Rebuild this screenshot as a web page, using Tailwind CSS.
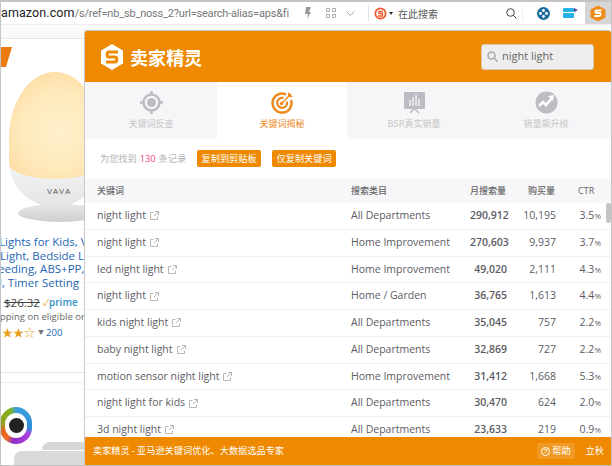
<!DOCTYPE html>
<html><head><meta charset="utf-8"><script src="https://cdn.jsdelivr.net/npm/@tailwindcss/browser@4"></script></head>
<body class="m-0">
<div class="relative w-[612px] h-[466px] overflow-hidden bg-white font-['Open_Sans','Noto_Sans_CJK_SC',sans-serif] border-t-2 border-l border-r border-b border-[#c4c4c4]">
  <!-- toolbar -->
  <div class="flex items-center h-[22px] bg-white text-[#777]">
    <div class="w-[307px] overflow-hidden whitespace-nowrap font-['Roboto',sans-serif] text-[11px] tracking-[-0.2px]"><span class="text-[#222] text-[12.5px] tracking-[0.1px]">amazon.com</span>/s/ref=nb_sb_noss_2?url=search-alias=aps&amp;fi</div>
    <svg class="w-[6px] h-[12px] shrink-0 ml-[1px]" viewBox="0 0 6 12"><path d="M1 0h5L4 5h2l-4 7 1-5H0z" fill="#999"/></svg>
    <svg class="w-[10px] h-[10px] shrink-0 ml-[15px]" viewBox="0 0 10 10" fill="none" stroke="#aaa"><path d="M.5.5h3v3h-3zM6.500.5h3v3h-3zM.5 6.500h3v3h-3zM6.500 6.500h3v3h-3z"/></svg>
    <svg class="w-[9px] h-[5px] shrink-0 ml-[10px]" viewBox="0 0 9 5" fill="none" stroke="#aaa"><path d="M.5.5l4 4 4-4"/></svg>
    <div class="w-px h-[16px] shrink-0 bg-[#e5e5e5] ml-[13px]"></div>
    <svg class="w-[13px] h-[13px] shrink-0 ml-[5px]" viewBox="0 0 13 13"><circle cx="6.500" cy="6.500" r="6" fill="#f15a30"/><circle cx="6.500" cy="6.500" r="4.300" fill="#fff"/><path d="M9 4.500H5v2h3.500v2.500H4" fill="none" stroke="#f15a30" stroke-width="1.300"/></svg>
    <svg class="w-[4px] h-[3px] shrink-0 ml-[2px]" viewBox="0 0 4 3"><path d="M0 0h4L2 3z" fill="#333"/></svg>
    <div class="ml-[5px] w-[108px] shrink-0 font-['Noto_Sans_CJK_SC',sans-serif] text-[10px] text-[#555]">在此搜索</div>
    <svg class="w-[11px] h-[11px] shrink-0" viewBox="0 0 11 11" fill="none" stroke="#444" stroke-width="1"><circle cx="4.500" cy="4.500" r="3.800"/><path d="M7.500 7.500L10.500 10.500"/></svg>
    <div class="w-px h-[16px] shrink-0 bg-[#eee] ml-[5px]"></div>
    <svg class="w-[13px] h-[13px] shrink-0 ml-[14px]" viewBox="0 0 13 13"><circle cx="6.500" cy="6.500" r="6.500" fill="#1d6c9e"/><circle cx="6.500" cy="3.500" r="1.400" fill="#fff"/><circle cx="6.500" cy="9.500" r="1.400" fill="#fff"/><circle cx="3.500" cy="6.500" r="1.400" fill="#fff"/><circle cx="9.500" cy="6.500" r="1.400" fill="#fff"/></svg>
    <svg class="w-[15px] h-[10px] shrink-0 ml-[13px]" viewBox="0 0 15 10"><rect x="0" y="0" width="11" height="4" rx="1" fill="#24b2e6"/><rect x="0" y="5" width="11" height="5" rx="1" fill="#24b2e6"/><path d="M11 0l4 2-4 2z" fill="#5a3fa0"/></svg>
    <div class="ml-[7px] w-[26px] h-[22px] shrink-0 bg-[#d6d6d6] flex items-center justify-center">
      <svg class="w-[16px] h-[17px]" viewBox="0 0 16 17"><path d="M8 .5l7.500 4v8L8 16.500.5 12.500v-8z" fill="#f08c1e"/><path d="M11.500 5.500H6.500C5 5.500 5 8 6.500 8h3c1.500 0 1.500 3-.5 3H4.500" fill="none" stroke="#fff" stroke-width="1.800"/></svg>
    </div>
  </div>

  <!-- page beneath -->
  <div class="border-t border-[#eee] h-[14px] bg-[#fafafa]"></div>
  <div class="border-t border-[#e6e6e6] h-[9px]"></div>
  <div class="relative">
    <div class="w-0 h-0 border-t-[20px] border-t-[#ec7a0f] border-r-[6px] border-r-transparent border-l-[5px] border-l-[#ec7a0f]"></div>
    <div class="absolute left-[17px] top-[157px] w-[84px] h-[18px] rounded-[50%] bg-gradient-to-b from-[#e6e6e6] to-[#cfcfcf]"></div>
    <div class="absolute left-[8px] top-[110px] w-[92px] h-[50px] rounded-b-[46px] bg-gradient-to-b from-[#f7f7f7] to-[#e4e4e4]"></div>
    <div class="absolute left-[8px] top-[25px] w-[92px] h-[107px] rounded-[50%_50%_50%_50%/62%_62%_14%_14%] bg-[radial-gradient(circle_at_55%_55%,#fff0cc_0%,#fee9bb_50%,#fcd696_100%)]"></div>
    <div class="absolute left-[46px] top-[141px] text-[7.500px] leading-none text-[#555] font-['Liberation_Sans',sans-serif] tracking-[1.600px]">VAVA</div>
    <div class="absolute left-0 top-[188px] w-[83px] overflow-hidden whitespace-nowrap text-[11.5px] leading-[13.700px] text-[#1e66b5]">
      <div class="-ml-[2px]">Lights for Kids, VAVA</div>
      <div class="-ml-[1px]">Light, Bedside Lamp</div>
      <div class="-ml-[3px]">eeding, ABS+PP, Lamp</div>
      <div class="-ml-[2px]">l, Timer Setting</div>
      <div class="flex items-center mt-[6px] ml-[3px]"><span class="text-[#444] line-through text-[11.5px]">$26.32</span><span class="ml-[3px] text-[#f39c1f] text-[9px]">✓</span><span class="text-[#2f8fc4] text-[10px] font-semibold">prime</span></div>
      <div class="text-[#666] text-[9.500px] leading-[13px] -ml-[1px]">pping on eligible order</div>
      <div class="flex items-center mt-[3px] ml-[1px] text-[9.500px]"><span class="text-[#e8a020] text-[11px] leading-[13px]">★★☆</span><span class="ml-[3px] text-[#777] text-[6px]">▼</span><span class="ml-[2px]">200</span></div>
    </div>
    <div class="absolute left-0 top-[325px] w-[83px] h-px bg-[#e5e5e5]"></div>
    <div class="absolute left-0 top-[335px] w-[83px] border-t border-[#eee]"></div>
    <div class="absolute -left-[1px] top-[360px] w-[32px] h-[37px] rounded-full bg-[conic-gradient(#3aa0e0_0deg,#2f8fd8_100deg,#b040e0_125deg,#9030c8_190deg,#f06a20_215deg,#e06020_250deg,#98a020_275deg,#80b020_340deg,#3aa0e0_360deg)] flex items-center justify-center"><div class="w-[22px] h-[25px] rounded-full bg-white flex items-center justify-center"><div class="w-[15px] h-[15px] rounded-full bg-[#222]"></div></div></div>
    <div class="absolute left-[41px] top-[395px] w-[42px] h-[12px] bg-[#d6d8d8] rounded-tl-[8px]"></div>
    <div class="absolute left-[13px] top-[403px] w-[70px] h-[20px] bg-[#d8dada] rounded-tl-[8px] border-t border-white"></div>
  </div>

  <!-- popup panel -->
  <div class="absolute left-[83px] top-[28px] w-[527px] h-[435px] flex flex-col bg-white rounded-t-[3px] border-l border-t border-[#c9c9c9]">
    <div class="flex items-center justify-between h-[51px] bg-[#ee8900] rounded-t-[2px] shrink-0 pl-[16px] pr-[17px]">
      <div class="flex items-center gap-[7px]">
        <svg class="w-[22px] h-[26px]" viewBox="0 0 22 26"><path d="M11 0l11 6.500v13L11 26 0 19.500v-13z" fill="#fff"/><path d="M17 8H8c-2.500 0-2.500 5 0 5h6c2.500 0 2.500 5 0 5H5" fill="none" stroke="#ee8900" stroke-width="3"/></svg>
        <span class="font-['Noto_Sans_CJK_SC',sans-serif] font-bold text-[18px] leading-none tracking-[0.1px] text-white">卖家精灵</span>
      </div>
      <div class="flex items-center w-[113px] h-[26px] rounded-[3px] bg-[#eee] border border-[#d9c9b0] pl-[5px] text-[11px] text-[#666]">
        <svg class="w-[11px] h-[11px] mr-[4px]" viewBox="0 0 11 11" fill="none" stroke="#a8a8b0" stroke-width="1.500"><circle cx="4.500" cy="4.500" r="3.500"/><path d="M7 7l3.500 3.500"/></svg>
        <span>night light</span>
      </div>
    </div>
    <div class="grid grid-cols-[132px_130px_134px_1fr] h-[57px] shrink-0 bg-[#f6f6f8] text-[9px] font-['Noto_Sans_CJK_SC',sans-serif] text-[#c6c6c6] text-center">
      <div class="flex flex-col items-center pt-[9px]">
        <svg class="w-[23px] h-[23px]" viewBox="0 0 23 23" fill="none" stroke="#bcbcc4"><circle cx="11.500" cy="11.500" r="8" stroke-width="2.500"/><circle cx="11.500" cy="11.500" r="4.500" fill="#bcbcc4" stroke="none"/><path d="M11.500 0v4M11.500 19v4M0 11.500h4M19 11.500h4" stroke-width="2.500"/></svg>
        <span class="mt-[3px]">关键词反查</span>
      </div>
      <div class="flex flex-col items-center pt-[9px] bg-white text-[#ee8a1d]">
        <svg class="w-[23px] h-[23px]" viewBox="0 0 23 23" fill="none" stroke="#ee8a1d"><path d="M15 3.500A9.500 9.500 0 1 0 20 9" stroke-width="2.500"/><path d="M12.500 7A5 5 0 1 0 16 10.500" stroke-width="2.200"/><circle cx="10.500" cy="12.500" r="1.800" fill="#ee8a1d" stroke="none"/><path d="M11 12L20 3" stroke-width="1.500"/><path d="M17 1v5h5z" fill="#ee8a1d" stroke="none"/></svg>
        <span class="mt-[3px]">关键词揭秘</span>
      </div>
      <div class="flex flex-col items-center pt-[9px]">
        <svg class="w-[23px] h-[23px]" viewBox="0 0 23 23"><rect x="1" y="1" width="21" height="17" rx="1" fill="#bcbcc4"/><path d="M7 22l4.500-4.500L16 22" fill="none" stroke="#bcbcc4" stroke-width="1.600"/><path d="M7 9v6M10 6v9M13 4v11M16 8v7" stroke="#fff" stroke-width="1.200"/></svg>
        <span class="mt-[3px]">BSR真实销量</span>
      </div>
      <div class="flex flex-col items-center pt-[9px]">
        <svg class="w-[23px] h-[23px]" viewBox="0 0 23 23"><circle cx="11.500" cy="11.500" r="11" fill="#bcbcc4"/><path d="M4 15l4-4 3 3 6-7" fill="none" stroke="#fff" stroke-width="2.600"/><path d="M13 5l6-1-1 6z" fill="#fff"/></svg>
        <span class="mt-[3px]">销量飙升榜</span>
      </div>
    </div>
    <div class="flex items-center h-[39px] shrink-0 pl-[15px] text-[9.200px] font-['Noto_Sans_CJK_SC',sans-serif] text-[#b4b4b4]">
      <span>为您找到</span><span class="mx-[3px] text-[#f0457a] font-['Open_Sans',sans-serif]">130</span><span>条记录</span>
      <span class="ml-[11px] h-[17px] w-[64px] justify-center flex items-center rounded-[2px] bg-[#ee8900] text-white">复制到剪贴板</span>
      <span class="ml-[11px] h-[17px] w-[64px] justify-center flex items-center rounded-[2px] bg-[#ee8900] text-white">仅复制关键词</span>
    </div>
    <div class="relative flex-1 min-h-0 overflow-hidden">
      <div class="flex items-center h-[25px] bg-[#f7f7f9] pl-[12px] text-[9px] font-['Noto_Sans_CJK_SC',sans-serif] font-medium text-[#666]">
        <div class="w-[254px]">关键词</div><div class="w-[119px]">搜索类目</div><div class="w-[58px]">月搜索量</div><div class="w-[50px]">购买量</div><div class="font-['Open_Sans',sans-serif]">CTR</div>
      </div>
      <div class="text-[10.500px] text-[#5c5c64]">
        <div class="flex items-center h-[26.750px] pl-[12px] border-b border-[#efeff2]"><div class="w-[254px] flex items-center gap-[4px]">night light<svg class="w-[9px] h-[9px]" viewBox="0 0 9 9" fill="none" stroke="#b8b8b8"><path d="M3.500 1.500H.5v7h7V5.500M5 .5h3.500V4M8.500.5L4 5"/></svg></div><div class="w-[119px]">All Departments</div><div class="w-[37px] text-right font-semibold">290,912</div><div class="w-[49px] text-right">10,195</div><div class="w-[45px] text-right">3.5<span class="text-[8px]">%</span></div></div>
        <div class="flex items-center h-[26.750px] pl-[12px] border-b border-[#efeff2]"><div class="w-[254px] flex items-center gap-[4px]">night light<svg class="w-[9px] h-[9px]" viewBox="0 0 9 9" fill="none" stroke="#b8b8b8"><path d="M3.500 1.500H.5v7h7V5.500M5 .5h3.500V4M8.500.5L4 5"/></svg></div><div class="w-[119px]">Home Improvement</div><div class="w-[37px] text-right font-semibold">270,603</div><div class="w-[49px] text-right">9,937</div><div class="w-[45px] text-right">3.7<span class="text-[8px]">%</span></div></div>
        <div class="flex items-center h-[26.750px] pl-[12px] border-b border-[#efeff2]"><div class="w-[254px] flex items-center gap-[4px]">led night light<svg class="w-[9px] h-[9px]" viewBox="0 0 9 9" fill="none" stroke="#b8b8b8"><path d="M3.500 1.500H.5v7h7V5.500M5 .5h3.500V4M8.500.5L4 5"/></svg></div><div class="w-[119px]">Home Improvement</div><div class="w-[37px] text-right font-semibold">49,020</div><div class="w-[49px] text-right">2,111</div><div class="w-[45px] text-right">4.3<span class="text-[8px]">%</span></div></div>
        <div class="flex items-center h-[26.750px] pl-[12px] border-b border-[#efeff2]"><div class="w-[254px] flex items-center gap-[4px]">night light<svg class="w-[9px] h-[9px]" viewBox="0 0 9 9" fill="none" stroke="#b8b8b8"><path d="M3.500 1.500H.5v7h7V5.500M5 .5h3.500V4M8.500.5L4 5"/></svg></div><div class="w-[119px]">Home / Garden</div><div class="w-[37px] text-right font-semibold">36,765</div><div class="w-[49px] text-right">1,613</div><div class="w-[45px] text-right">4.4<span class="text-[8px]">%</span></div></div>
        <div class="flex items-center h-[26.750px] pl-[12px] border-b border-[#efeff2]"><div class="w-[254px] flex items-center gap-[4px]">kids night light<svg class="w-[9px] h-[9px]" viewBox="0 0 9 9" fill="none" stroke="#b8b8b8"><path d="M3.500 1.500H.5v7h7V5.500M5 .5h3.500V4M8.500.5L4 5"/></svg></div><div class="w-[119px]">All Departments</div><div class="w-[37px] text-right font-semibold">35,045</div><div class="w-[49px] text-right">757</div><div class="w-[45px] text-right">2.2<span class="text-[8px]">%</span></div></div>
        <div class="flex items-center h-[26.750px] pl-[12px] border-b border-[#efeff2]"><div class="w-[254px] flex items-center gap-[4px]">baby night light<svg class="w-[9px] h-[9px]" viewBox="0 0 9 9" fill="none" stroke="#b8b8b8"><path d="M3.500 1.500H.5v7h7V5.500M5 .5h3.500V4M8.500.5L4 5"/></svg></div><div class="w-[119px]">All Departments</div><div class="w-[37px] text-right font-semibold">32,869</div><div class="w-[49px] text-right">727</div><div class="w-[45px] text-right">2.2<span class="text-[8px]">%</span></div></div>
        <div class="flex items-center h-[26.750px] pl-[12px] border-b border-[#efeff2]"><div class="w-[254px] flex items-center gap-[4px]">motion sensor night light<svg class="w-[9px] h-[9px]" viewBox="0 0 9 9" fill="none" stroke="#b8b8b8"><path d="M3.500 1.500H.5v7h7V5.500M5 .5h3.500V4M8.500.5L4 5"/></svg></div><div class="w-[119px]">Home Improvement</div><div class="w-[37px] text-right font-semibold">31,412</div><div class="w-[49px] text-right">1,668</div><div class="w-[45px] text-right">5.3<span class="text-[8px]">%</span></div></div>
        <div class="flex items-center h-[26.750px] pl-[12px] border-b border-[#efeff2]"><div class="w-[254px] flex items-center gap-[4px]">night light for kids<svg class="w-[9px] h-[9px]" viewBox="0 0 9 9" fill="none" stroke="#b8b8b8"><path d="M3.500 1.500H.5v7h7V5.500M5 .5h3.500V4M8.500.5L4 5"/></svg></div><div class="w-[119px]">All Departments</div><div class="w-[37px] text-right font-semibold">30,470</div><div class="w-[49px] text-right">624</div><div class="w-[45px] text-right">2.0<span class="text-[8px]">%</span></div></div>
        <div class="flex items-center h-[26.750px] pl-[12px] border-b border-[#efeff2]"><div class="w-[254px] flex items-center gap-[4px]">3d night light<svg class="w-[9px] h-[9px]" viewBox="0 0 9 9" fill="none" stroke="#b8b8b8"><path d="M3.500 1.500H.5v7h7V5.500M5 .5h3.500V4M8.500.5L4 5"/></svg></div><div class="w-[119px]">All Departments</div><div class="w-[37px] text-right font-semibold">23,633</div><div class="w-[49px] text-right">219</div><div class="w-[45px] text-right">0.9<span class="text-[8px]">%</span></div></div>
      </div>
      <div class="absolute right-0 top-[25px] w-[5px] h-[20px] bg-[#c4c4c4] rounded-[2px]"></div>
    </div>
    <div class="flex items-center justify-between h-[28px] shrink-0 bg-[#ee8900] pl-[8px] pr-[7px] text-white text-[9.200px] font-['Noto_Sans_CJK_SC',sans-serif]">
      <span>卖家精灵 - 亚马逊关键词优化、大数据选品专家</span>
      <div class="flex items-center gap-[11px]">
        <span class="flex items-center gap-[2px] h-[16px] px-[4px] rounded-[2px] bg-white/15"><svg class="w-[9px] h-[9px]" viewBox="0 0 9 9" fill="none" stroke="#fff"><circle cx="4.500" cy="4.500" r="4"/><path d="M3.200 3.500c0-1.800 2.800-1.800 2.800 0 0 1-1.500 1-1.500 2.200"/></svg>帮助</span>
        <span>立秋</span>
      </div>
    </div>
  </div>
</div>
</body></html>
